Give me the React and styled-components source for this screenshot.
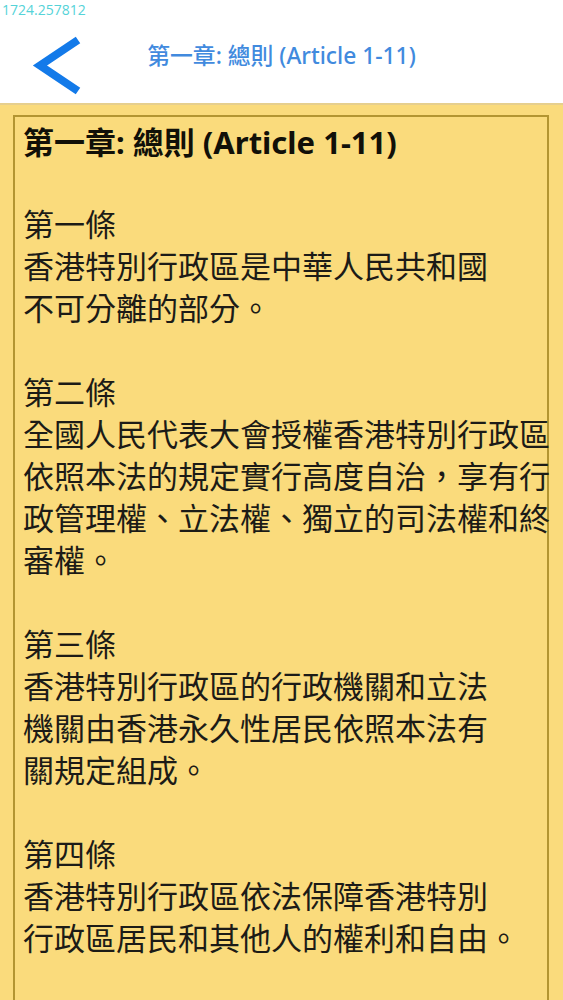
import React from "react";
import styled, { createGlobalStyle } from "styled-components";

const GlobalStyle = createGlobalStyle`
  html, body {
    margin: 0;
    padding: 0;
    background: #ffffff;
  }
  body {
    font-family: "Noto Sans", "Noto Sans CJK TC", sans-serif;
  }
  * { box-sizing: border-box; }
`;

const Page = styled.div`
  position: relative;
  width: 563px;
  min-height: 1000px;
  overflow: hidden;
  background: #ffffff;
`;

const FrameCounter = styled.div`
  position: absolute;
  top: 1px;
  left: 2px;
  font-family: "Open Sans", "Noto Sans", sans-serif;
  font-size: 14px;
  line-height: 18px;
  color: #55d3d8;
  z-index: 2;
`;

const Header = styled.header`
  display: grid;
  grid-template-columns: 1fr auto 1fr;
  height: 103px;
  background: #ffffff;
`;

const BackButton = styled.button`
  justify-self: start;
  align-self: start;
  margin: 33px 0 0 28px;
  padding: 0;
  border: none;
  background: transparent;
  width: 60px;
  height: 66px;
  cursor: pointer;
  svg { display: block; }
`;

const HeaderTitle = styled.h1`
  align-self: start;
  margin: 42px 0 0;
  font-family: "Noto Sans", "Noto Sans CJK TC", sans-serif;
  font-size: 22.8px;
  line-height: 28px;
  font-weight: 500;
  color: #418ade;
  white-space: nowrap;
`;

const Content = styled.main`
  background: #fadb7c;
  border-top: 2px solid #e6cf8e;
  padding: 10px 14px 0 13px;
  min-height: 897px;
`;

const Card = styled.section`
  border: 2px solid #b39531;
  border-bottom: none;
  padding: 4px 8px 40px 8px;
  min-height: 887px;
  color: #1c1b17;
`;

const ChapterTitle = styled.h2`
  margin: 0 0 39px;
  font-family: "Noto Sans", "Noto Sans CJK TC", sans-serif;
  font-size: 31px;
  line-height: 42px;
  font-weight: 700;
  color: #111008;
  white-space: nowrap;
`;

const Article = styled.article`
  margin: 0 0 42px;
`;

const Line = styled.div`
  font-family: "Noto Sans CJK TC", "Noto Sans", sans-serif;
  font-size: 31px;
  line-height: 42px;
  font-weight: 400;
  white-space: pre;
`;

const articles = [
  {
    title: "第一條",
    lines: ["香港特別行政區是中華人民共和國", "不可分離的部分。"],
  },
  {
    title: "第二條",
    lines: [
      "全國人民代表大會授權香港特別行政區",
      "依照本法的規定實行高度自治，享有行",
      "政管理權、立法權、獨立的司法權和終",
      "審權。",
    ],
  },
  {
    title: "第三條",
    lines: [
      "香港特別行政區的行政機關和立法",
      "機關由香港永久性居民依照本法有",
      "關規定組成。",
    ],
  },
  {
    title: "第四條",
    lines: [
      "香港特別行政區依法保障香港特別",
      "行政區居民和其他人的權利和自由。",
    ],
  },
];

const BackIcon = () => (
  <svg width="60" height="66" viewBox="0 0 60 66" aria-hidden="true">
    <polyline
      points="50,7 12,32.5 50,58"
      fill="none"
      stroke="#137ae9"
      strokeWidth="8"
      strokeLinejoin="miter"
      strokeLinecap="butt"
    />
  </svg>
);

export default function App() {
  const title = "第一章: 總則 (Article 1-11)";
  return (
    <>
      <GlobalStyle />
      <Page>
        <FrameCounter>1724.257812</FrameCounter>
        <Header>
          <BackButton aria-label="Back">
            <BackIcon />
          </BackButton>
          <HeaderTitle>{title}</HeaderTitle>
          <div />
        </Header>
        <Content>
          <Card>
            <ChapterTitle>{title}</ChapterTitle>
            {articles.map((a) => (
              <Article key={a.title}>
                <Line>{a.title}</Line>
                {a.lines.map((l, i) => (
                  <Line key={i}>{l}</Line>
                ))}
              </Article>
            ))}
          </Card>
        </Content>
      </Page>
    </>
  );
}
